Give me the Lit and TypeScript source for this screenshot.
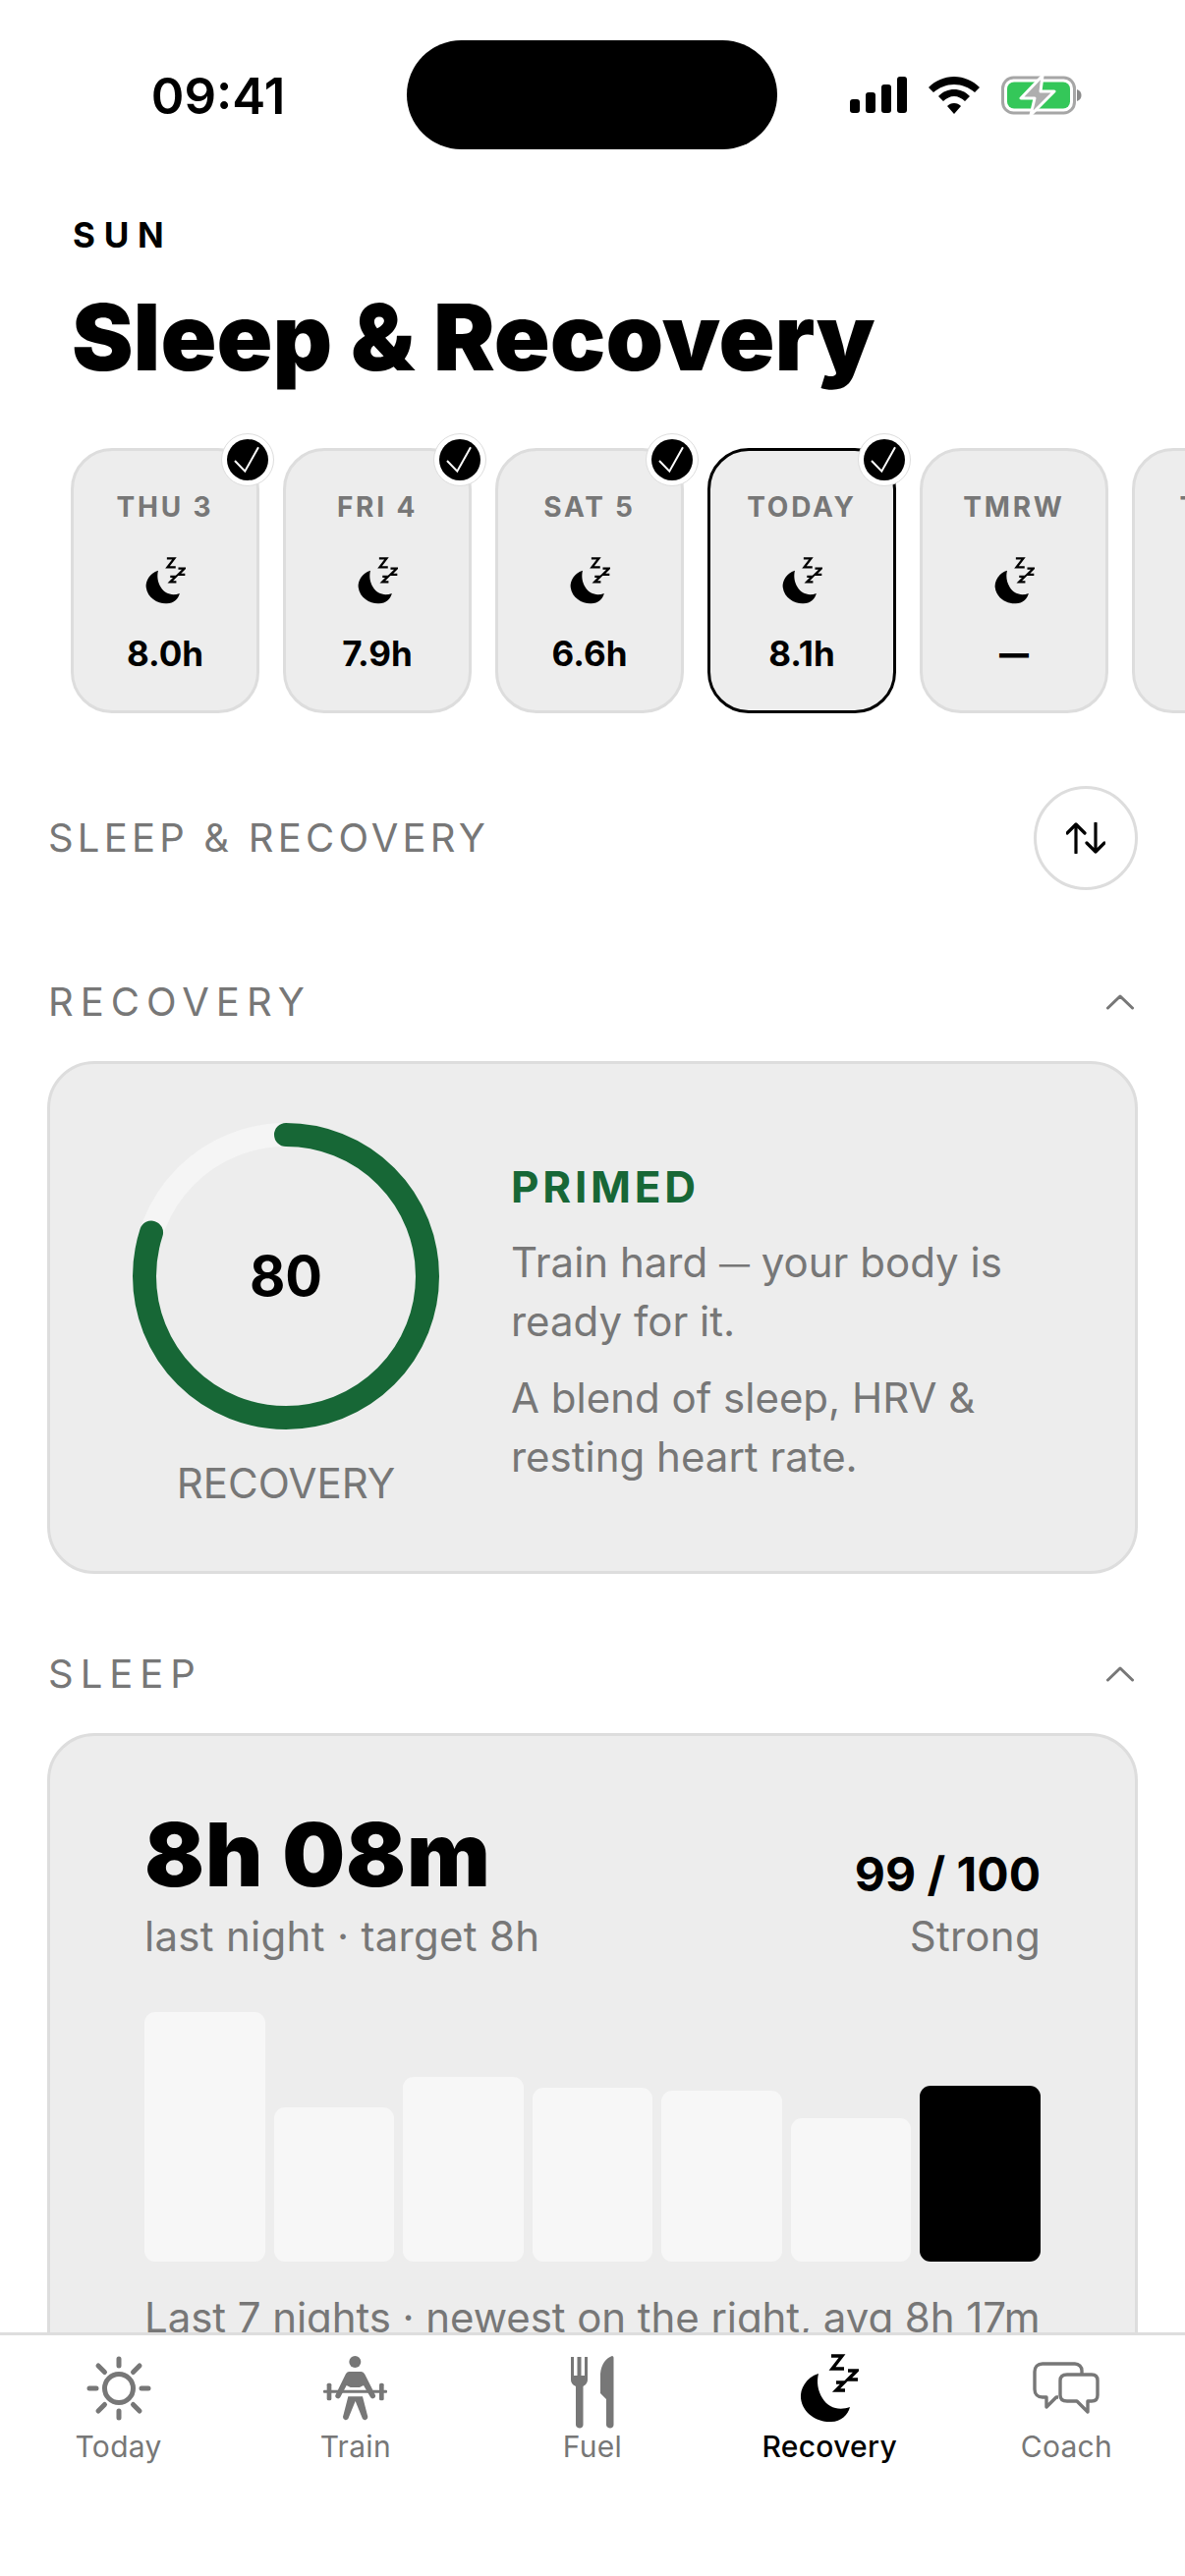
import { LitElement, html, css } from "lit";
import { customElement } from "lit/decorators.js";

const moon = (cls: string) => html`<svg class=${cls} viewBox="0 0 60 70" fill="currentColor">
  <path d="M19 20C6 24 0 36 1 45C3 62 20 70 32 69C42 69 49 62 51 54C40 58 29 55 23 45C18 37 17 28 19 20Z"/>
  <g fill="none" stroke="currentColor" stroke-width="3.4">
    <path d="M32 2H43L33 15H45"/><path d="M49 17H58L49 26H59"/><path d="M37 29H45L37 37H46"/>
  </g></svg>`;

const chev = html`<svg class="chev" viewBox="0 0 28 16" fill="none" stroke="#777" stroke-width="3" stroke-linecap="round" stroke-linejoin="round"><path d="M1.5 14L14 2L26.5 14"/></svg>`;

const days = [
  { l: "THU 3", v: "8.0h", c: 1 }, { l: "FRI 4", v: "7.9h", c: 1 }, { l: "SAT 5", v: "6.6h", c: 1 },
  { l: "TODAY", v: "8.1h", c: 1, t: 1 }, { l: "TMRW", v: "—", c: 0 }, { l: "TUE 8", v: "—", c: 0 },
];
const bars = [254, 157, 188, 177, 174, 146, 179];

@customElement("app-root")
export class AppRoot extends LitElement {
  static styles = css`
    :host { display: flex; flex-direction: column; width: 1206px; height: 2622px; overflow: hidden; background: #fff; color: #000; font-family: Inter, "Liberation Sans", sans-serif; }
    .status { flex: none; height: 152px; padding-top: 41px; box-sizing: border-box; display: grid; grid-template-columns: 414px 377px 1fr; }
    .time { font-size: 51px; font-weight: 600; text-align: center; padding: 37px 0 0 30px; line-height: 40px; box-sizing: border-box; }
    .island { width: 377px; height: 111px; background: #000; border-radius: 56px; }
    .sys { display: flex; align-items: center; height: 111px; padding-left: 74px; }
    .sys svg { display: block; }
    .content { flex: 1; min-height: 0; overflow: hidden; }
    .eyebrow { margin: 72px 0 0 74px; font-size: 35px; font-weight: 700; letter-spacing: .25em; line-height: 30px; height: 30px; }
    h1 { margin: 39px 0 0 73px; font-size: 94px; font-weight: 900; letter-spacing: 0; line-height: 100px; white-space: nowrap; }
    .strip { display: flex; gap: 24px; padding: 63px 0 0 72px; overflow: hidden; }
    .day { position: relative; flex: none; width: 192px; height: 270px; box-sizing: border-box; border: 3px solid #ddd; border-radius: 42px; background: #ededed; display: flex; flex-direction: column; align-items: center; padding-top: 40px; }
    .day.today { border-color: #000; }
    .day-l { font-size: 28px; font-weight: 700; color: #777; letter-spacing: .1em; line-height: 34px; white-space: nowrap; }
    .day-i { width: 41px; height: 48px; margin-top: 34px; display: block; flex: none; }
    .day-v { font-size: 35px; font-weight: 700; line-height: 40px; margin-top: 30px; }
    .day-v.none { font-size: 30px; font-weight: 900; }
    .check { position: absolute; top: -18px; right: -18px; width: 54px; height: 54px; box-sizing: border-box; border: 1px solid #ddd; background: #fff; border-radius: 50%; display: flex; align-items: center; justify-content: center; }
    .check svg { width: 42px; height: 42px; display: block; }
    .sec { display: flex; justify-content: space-between; align-items: center; padding: 0 48px 0 49px; }
    .sec-t { font-size: 40px; font-weight: 400; color: #777; letter-spacing: 4.2px; line-height: 48px; white-space: nowrap; }
    .sec-t.w { letter-spacing: 7px; }
    .swap { width: 106px; height: 106px; box-sizing: border-box; border: 3px solid #ddd; border-radius: 50%; display: flex; align-items: center; justify-content: center; }
    .sec.first { margin-top: 74px; }
    .sec.rec { margin-top: 90px; }
    .sec.slp { margin-top: 78px; }
    .chev { width: 28px; height: 16px; margin-right: 4px; display: block; }
    .card { margin: 0 48px; box-sizing: border-box; border: 3px solid #ddd; background: #ededed; border-radius: 48px; }
    .c1 { margin-top: 36px; height: 522px; display: flex; padding: 60px 0 0 84px; gap: 73px; }
    .ringwrap { width: 312px; flex: none; display: flex; flex-direction: column; align-items: center; }
    .ring { position: relative; width: 312px; height: 312px; }
    .ring svg { display: block; }
    .ring b { position: absolute; inset: 0; display: flex; align-items: center; justify-content: center; font-size: 56px; font-weight: 700; }
    .ringl { font-size: 42px; color: #777; line-height: 48px; margin-top: 31px; }
    .info { padding-top: 39px; }
    .st { font-size: 44px; font-weight: 700; color: #176736; line-height: 52px; letter-spacing: .085em; }
    .tx { font-size: 42px; color: #777; line-height: 60px; white-space: nowrap; }
    .tx.a { margin-top: 21px; }
    .tx.b { margin-top: 18px; }
    .dash { font-size: 31px; line-height: 0; vertical-align: .06em; }
    .c2 { margin-top: 36px; padding: 73px 96px 0 96px; height: 900px; }
    .top { display: flex; justify-content: space-between; align-items: flex-end; }
    .big { font-size: 90px; font-weight: 900; line-height: 96px; letter-spacing: .01em; }
    .sub { font-size: 42px; color: #777; line-height: 50px; margin-top: 10px; letter-spacing: .3px; }
    .r { text-align: right; }
    .r .sub { margin-top: 8px; }
    .score { font-size: 48px; font-weight: 700; line-height: 60px; }
    .chart { display: flex; gap: 9px; align-items: flex-end; height: 254px; margin-top: 52px; }
    .bar { flex: 1; border-radius: 11px; background: #f7f7f7; }
    .bar.on { background: #000; }
    .note { font-size: 42px; color: #777; line-height: 50px; margin-top: 32px; white-space: nowrap; letter-spacing: -.07px; }
    .tabs { flex: none; height: 248px; box-sizing: border-box; border-top: 3px solid #ddd; background: #fff; display: grid; grid-template-columns: repeat(5, 1fr); }
    .tab { display: flex; flex-direction: column; align-items: center; color: #777; font-size: 30px; letter-spacing: .01em; }
    .tab.on { color: #000; font-weight: 500; }
    .ti { height: 78px; margin-top: 15px; display: flex; align-items: center; justify-content: center; }
    .ti svg { display: block; }
    .ti .fork { margin-top: 8px; }
    .tm { width: 60px; height: 70px; }
    .tl { line-height: 36px; margin-top: 2px; }
  `;

  render() {
    return html`
      <div class="status">
        <div class="time">09:41</div>
        <div class="island"></div>
        <div class="sys">
          <svg width="58" height="37" viewBox="0 0 58 37" fill="#000"><rect y="23" width="10" height="14" rx="3"/><rect x="16" y="16" width="10" height="21" rx="3"/><rect x="32" y="8" width="10" height="29" rx="3"/><rect x="48" width="10" height="37" rx="3"/></svg>
          <svg style="margin-left:22px" width="52" height="38" viewBox="0 0 52 38"><path d="M26 0C36 0 45 4 52 11L47 16C41 11 34 8 26 8S11 11 5 16L0 11C7 4 16 0 26 0Z"/><path d="M26 13C32 13 37 15 42 20L37 25C34 22 30 20 26 20S18 22 15 25L10 20C15 15 20 13 26 13Z"/><path d="M26 27C29 27 31 28 33 30L26 38L19 30C21 28 23 27 26 27Z"/></svg>
          <svg style="margin-left:22px" width="82" height="42" viewBox="0 0 82 42"><rect x="1.5" y="3" width="73" height="36" rx="11" fill="none" stroke="#a6a6a6" stroke-width="3"/><rect x="6" y="7.5" width="64" height="27" rx="7" fill="#34c759"/><path d="M77 15C80 16 81.5 18 81.5 21S80 26 77 27Z" fill="#8a8a8a"/><path d="M42 1L20 24H34L30 41L54 17H40Z" fill="#aeaeae" stroke="#fff" stroke-width="3" stroke-linejoin="round"/></svg>
        </div>
      </div>
      <div class="content">
        <div class="eyebrow">SUN</div>
        <h1>Sleep &amp; Recovery</h1>
        <div class="strip">
          ${days.map(d => html`<div class="day ${d.t ? "today" : ""}">
            ${d.c ? html`<div class="check"><svg viewBox="0 0 42 42"><circle cx="21" cy="21" r="21"/><path d="M8 22L18.3 32.7L32 8.3" fill="none" stroke="#fff" stroke-width="2"/></svg></div>` : ""}
            <div class="day-l">${d.l}</div>
            ${moon("day-i")}
            <div class="day-v ${d.v === "—" ? "none" : ""}">${d.v}</div>
          </div>`)}
        </div>
        <div class="sec first"><div class="sec-t">SLEEP &amp; RECOVERY</div>
          <div class="swap"><svg width="40" height="32" viewBox="0 0 40 32" fill="none" stroke="#000" stroke-width="3.2" stroke-linecap="round" stroke-linejoin="round"><path d="M10 31V2M1 11L10 2L19 11"/><path d="M30 1V30M21 21L30 30L39 21"/></svg></div>
        </div>
        <div class="sec rec"><div class="sec-t w">RECOVERY</div>${chev}</div>
        <div class="card c1">
          <div class="ringwrap">
            <div class="ring">
              <svg width="312" height="312" viewBox="0 0 312 312" fill="none" stroke-width="24">
                <circle cx="156" cy="156" r="144" stroke="#f5f5f5"/>
                <circle cx="156" cy="156" r="144" stroke="#176736" stroke-linecap="round" pathLength="100" stroke-dasharray="80 100" transform="rotate(-90 156 156)"/>
              </svg>
              <b>80</b>
            </div>
            <div class="ringl">RECOVERY</div>
          </div>
          <div class="info">
            <div class="st">PRIMED</div>
            <div class="tx a">Train hard <span class="dash">—</span> your body is<br>ready for it.</div>
            <div class="tx b">A blend of sleep, HRV &amp;<br>resting heart rate.</div>
          </div>
        </div>
        <div class="sec slp"><div class="sec-t w">SLEEP</div>${chev}</div>
        <div class="card c2">
          <div class="top">
            <div><div class="big">8h 08m</div><div class="sub">last night · target 8h</div></div>
            <div class="r"><div class="score">99 / 100</div><div class="sub">Strong</div></div>
          </div>
          <div class="chart">${bars.map((h, i) => html`<div class="bar ${i === 6 ? "on" : ""}" style="height:${h}px"></div>`)}</div>
          <div class="note">Last 7 nights · newest on the right, avg 8h 17m</div>
        </div>
      </div>
      <div class="tabs">
        <div class="tab"><div class="ti"><svg width="66" height="66" viewBox="0 0 66 66" fill="none" stroke="#777" stroke-width="5" stroke-linecap="round"><circle cx="33" cy="33" r="14.5"/><path d="M33 3V10M33 56V63M3 33H10M56 33H63M47.5 16.5L54 10M18.5 16.5L12 10M47.5 49.5L54 56M18.5 49.5L12 56"/></svg></div><div class="tl">Today</div></div>
        <div class="tab"><div class="ti"><svg width="65" height="66" viewBox="27 22 195 198" fill="#777"><circle cx="124" cy="40" r="18"/><path d="M105 70H143Q150 70 154 78L185 140A8 8 0 0 1 171 148L150 112L138 118H110L98 112L79 148A8 8 0 0 1 65 140L95 78Q99 70 105 70Z"/><rect x="27" y="126" width="195" height="9" rx="3"/><rect x="38" y="105" width="14" height="53" rx="5"/><rect x="198" y="105" width="14" height="53" rx="5"/><path d="M103 146H147L163 208A9 9 0 0 1 147 214L125 160L103 214A9 9 0 0 1 87 208Z"/></svg></div><div class="tl">Train</div></div>
        <div class="tab"><div class="ti"><svg class="fork" width="44" height="74" viewBox="0 0 44 74" fill="#777"><path d="M0 1H3V20H6.5V1H10.5V20H14V1H17V24C17 28 14 30 12.5 31V70C12.5 72 11 73.5 9 73.5S5 72 5 70V31C3 30 0 28 0 24Z"/><path d="M42 0C43 0 43.5 1 43.5 2V70C43.5 72 42 73.5 40 73.5S36 72 36 70V44L30 38V18C31 8 36 2 42 0Z"/></svg></div><div class="tl">Fuel</div></div>
        <div class="tab on"><div class="ti">${moon("tm")}</div><div class="tl">Recovery</div></div>
        <div class="tab"><div class="ti"><svg width="68" height="54" viewBox="0 0 68 54" fill="none" stroke="#777" stroke-width="3.4" stroke-linejoin="round"><path d="M50 12V9C50 5 47 2 43 2H10C5 2 2 5 2 10V28C2 33 5 36 10 36H14V46L24 36H26"/><path d="M35 13H60C64 13 66 15 66 19V34C66 38 64 40 60 40H56V51L45 40H35C30 40 28 38 28 34V19C28 15 30 13 35 13Z"/></svg></div><div class="tl">Coach</div></div>
      </div>
    `;
  }
}
